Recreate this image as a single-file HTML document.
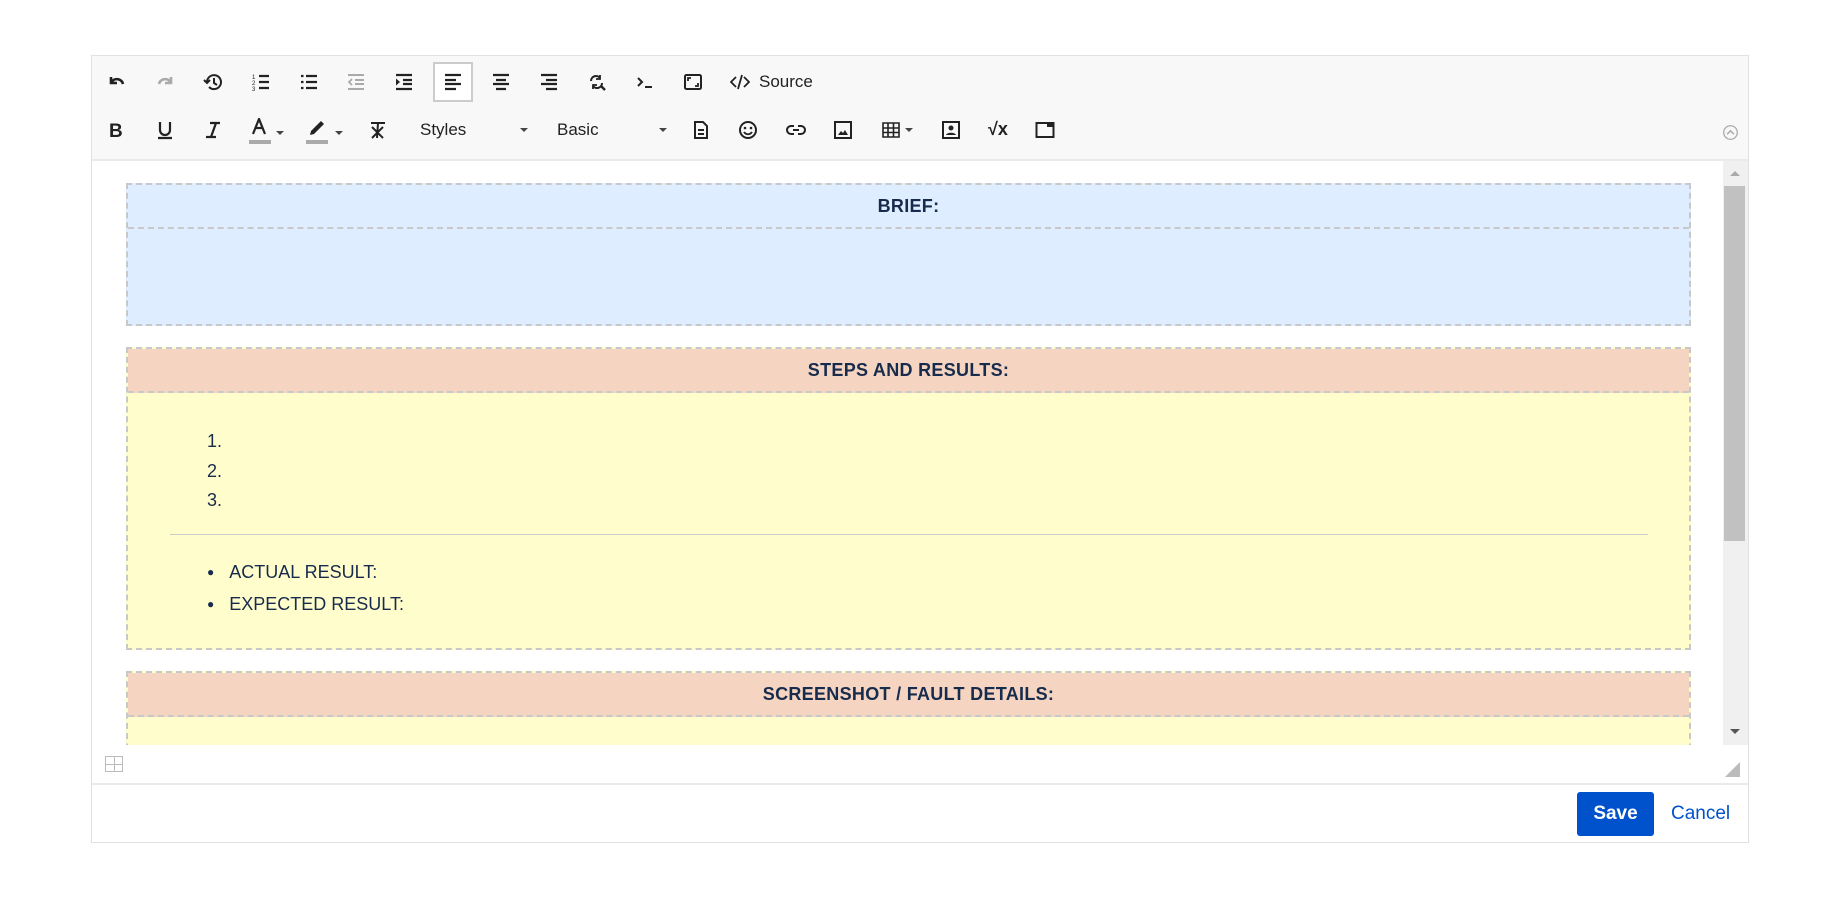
<!DOCTYPE html>
<html><head><meta charset="utf-8"><style>
*{box-sizing:border-box;margin:0;padding:0}
body{width:1840px;height:900px;background:#fff;font-family:"Liberation Sans",Arial,sans-serif;position:relative;overflow:hidden}
.ed{position:absolute;left:91px;top:55px;width:1658px;height:788px;border:1px solid #e1e1e1}
.tb{position:absolute;left:0;top:0;width:100%;height:105px;background:#f8f8f8;border-bottom:2px solid #ebebeb}
.i{position:absolute;width:20px;height:20px;color:#222}
.i svg{width:20px;height:20px;display:block}
.t{position:absolute;font-size:17px;color:#222}
.car{position:absolute;width:0;height:0;border-left:4px solid transparent;border-right:4px solid transparent;border-top:4px solid #444}
.ct{position:absolute;left:0;top:105px;width:1631px;height:584px;overflow:hidden;background:#fff}
.blk{position:absolute;left:34px;width:1565px;border:2px dashed #c8c8c8}
.hd{height:44px;border-bottom:2px dashed #c8c8c8;text-align:center;font-weight:bold;font-size:18px;color:#172b4d;line-height:42px;letter-spacing:.3px}
.sb{position:absolute;left:1631px;top:105px;width:25px;height:584px;background:#f0f0f0}
.c{font-size:18px;color:#172b4d;position:absolute}
</style></head><body>
<div class="ed">
<div class="tb">
<div class="i" style="left:15px;top:16px"><svg viewBox="0 0 20 20"><path d="M4 5v6h6M4.5 10.5C6 7.5 9 6.5 12 7.5c2 .7 3.5 2.5 4 4.5" fill="none" stroke="#222" stroke-width="2.6"/></svg></div>
<div class="i" style="left:63px;top:16px"><svg viewBox="0 0 20 20"><path d="M16 5v6h-6M15.5 10.5C14 7.5 11 6.5 8 7.5c-2 .7-3.5 2.5-4 4.5" fill="none" stroke="#aaa" stroke-width="2.6"/></svg></div>
<div class="i" style="left:111px;top:16px"><svg viewBox="0 0 20 20"><path d="M4 10a7 7 0 1 1 2 5" fill="none" stroke="#222" stroke-width="2"/><path d="M1 8l3 3 3-3" fill="none" stroke="#222" stroke-width="2"/><path d="M11 6v5l3 2" fill="none" stroke="#222" stroke-width="2"/></svg></div>
<div class="i" style="left:159px;top:16px"><svg viewBox="0 0 20 20"><path d="M8 4h10M8 10h10M8 16h10" stroke="#222" stroke-width="2.2"/><text x="1" y="7" font-size="6" fill="#222">1</text><text x="1" y="13" font-size="6" fill="#222">2</text><text x="1" y="19" font-size="6" fill="#222">3</text></svg></div>
<div class="i" style="left:207px;top:16px"><svg viewBox="0 0 20 20"><path d="M7 4h11M7 10h11M7 16h11M2 4h2.5M2 10h2.5M2 16h2.5" stroke="#222" stroke-width="2.2"/></svg></div>
<div class="i" style="left:254px;top:16px"><svg viewBox="0 0 20 20"><path d="M2 3h16M9 8h9M9 12h9M2 17h16" stroke="#aaa" stroke-width="2"/><path d="M6 7l-3 3 3 3" fill="none" stroke="#aaa" stroke-width="1.8"/></svg></div>
<div class="i" style="left:302px;top:16px"><svg viewBox="0 0 20 20"><path d="M2 3h16M9 8h9M9 12h9M2 17h16" stroke="#222" stroke-width="2.2"/><path d="M2 6.5l4 3.5-4 3.5z" fill="#222"/></svg></div>
<div style="position:absolute;left:341px;top:6px;width:40px;height:40px;border:2px solid #ccc;background:#fff"></div>
<div class="i" style="left:351px;top:16px"><svg viewBox="0 0 20 20"><path d="M2 3h16M2 8h11M2 12h16M2 17h11" stroke="#222" stroke-width="2.2"/></svg></div>
<div class="i" style="left:399px;top:16px"><svg viewBox="0 0 20 20"><path d="M2 3h16M5 8h10M2 12h16M5 17h10" stroke="#222" stroke-width="2.2"/></svg></div>
<div class="i" style="left:447px;top:16px"><svg viewBox="0 0 20 20"><path d="M2 3h16M7 8h11M2 12h16M7 17h11" stroke="#222" stroke-width="2.2"/></svg></div>
<div class="i" style="left:495px;top:16px"><svg viewBox="0 0 20 20"><path d="M4 9a5 5 0 0 1 9-3M15 11a5 5 0 0 1-9 3" fill="none" stroke="#222" stroke-width="2"/><path d="M13 3v4h-4M6 17v-4h4" fill="none" stroke="#222" stroke-width="1.8"/><path d="M14 14l4 4" stroke="#222" stroke-width="2.4"/></svg></div>
<div class="i" style="left:543px;top:16px"><svg viewBox="0 0 20 20"><path d="M3 6l4 4-4 4" fill="none" stroke="#222" stroke-width="2"/><path d="M10 15h7" stroke="#222" stroke-width="2"/></svg></div>
<div class="i" style="left:591px;top:16px"><svg viewBox="0 0 20 20"><rect x="2" y="3" width="16" height="14" rx="1.5" fill="none" stroke="#222" stroke-width="2"/><path d="M5 9V6h3M15 11v3h-3" fill="none" stroke="#222" stroke-width="1.8"/></svg></div>
<div class="i" style="left:638px;top:16px"><svg viewBox="0 0 20 20"><path d="M6 5l-5 5 5 5M14 5l5 5-5 5M12 3l-4 14" fill="none" stroke="#222" stroke-width="1.8"/></svg></div>
<div class="t" style="left:667px;top:16px">Source</div>
<div class="t" style="left:17px;top:65px;font-weight:bold;font-size:19px">B</div>
<div class="i" style="left:63px;top:64px"><svg viewBox="0 0 20 20"><path d="M5 2v8a5 5 0 0 0 10 0V2M3 18h14" fill="none" stroke="#222" stroke-width="2.2"/></svg></div>
<div class="i" style="left:111px;top:64px"><svg viewBox="0 0 20 20"><path d="M7 3h10M3 17h10M13 3L8 17" fill="none" stroke="#222" stroke-width="2.2"/></svg></div>
<div class="i" style="left:157px;top:62px"><svg viewBox="0 0 20 20"><path d="M4 16L10 1l6 15M6.5 10h7" fill="none" stroke="#222" stroke-width="2.2"/></svg></div>
<div style="position:absolute;left:157px;top:84px;width:22px;height:4px;background:#aaa"></div>
<div class="car" style="left:184px;top:75px"></div>
<div class="i" style="left:214px;top:62px"><svg viewBox="0 0 20 20"><path d="M4 17l1-4L15 3l3 3L8 16z" fill="#222"/></svg></div>
<div style="position:absolute;left:214px;top:84px;width:22px;height:4px;background:#aaa"></div>
<div class="car" style="left:243px;top:75px"></div>
<div class="i" style="left:276px;top:64px"><svg viewBox="0 0 20 20"><path d="M3 3h14M10 3l-1 15M4 7l11 11M15 7L4 18" fill="none" stroke="#222" stroke-width="2"/></svg></div>
<div class="t" style="left:328px;top:64px">Styles</div>
<div class="car" style="left:428px;top:72px"></div>
<div class="t" style="left:465px;top:64px">Basic</div>
<div class="car" style="left:567px;top:72px"></div>
<div class="i" style="left:599px;top:64px"><svg viewBox="0 0 20 20"><path d="M4 2h8l4 4v12H4z M7 10h6M7 14h6" fill="none" stroke="#222" stroke-width="2"/></svg></div>
<div class="i" style="left:646px;top:64px"><svg viewBox="0 0 20 20"><circle cx="10" cy="10" r="8" fill="none" stroke="#222" stroke-width="2"/><circle cx="7" cy="8" r="1.3" fill="#222"/><circle cx="13" cy="8" r="1.3" fill="#222"/><path d="M6 12c2 3 6 3 8 0" fill="none" stroke="#222" stroke-width="1.8"/></svg></div>
<div class="i" style="left:694px;top:64px"><svg viewBox="0 0 20 20"><path d="M8 6H5a4 4 0 0 0 0 8h3M12 6h3a4 4 0 0 1 0 8h-3M7 10h6" fill="none" stroke="#222" stroke-width="2"/></svg></div>
<div class="i" style="left:741px;top:64px"><svg viewBox="0 0 20 20"><rect x="2" y="2" width="16" height="16" fill="none" stroke="#222" stroke-width="2"/><path d="M5 15l3-4 2 2 2-3 3 5z" fill="#222"/></svg></div>
<div class="i" style="left:789px;top:64px"><svg viewBox="0 0 20 20"><path d="M2 3h16v14H2zM2 8h16M2 12.5h16M7 3v14M12.5 3v14" fill="none" stroke="#222" stroke-width="1.6"/></svg></div>
<div class="car" style="left:813px;top:72px"></div>
<div class="i" style="left:849px;top:64px"><svg viewBox="0 0 20 20"><rect x="2" y="2" width="16" height="16" fill="none" stroke="#222" stroke-width="2"/><circle cx="10" cy="8" r="2.5" fill="#222"/><path d="M5 15c1-3 9-3 10 0z" fill="#222"/></svg></div>
<div class="t" style="left:896px;top:63px;font-weight:bold;font-size:18px">√x</div>
<div class="i" style="left:943px;top:64px"><svg viewBox="0 0 20 20"><rect x="1.5" y="3" width="17" height="14" fill="none" stroke="#222" stroke-width="2"/><rect x="12" y="3" width="6.5" height="4" fill="#222"/></svg></div>
<div class="i" style="left:1630px;top:68px;width:17px;height:17px"><svg viewBox="0 0 20 20" style="width:17px;height:17px"><circle cx="10" cy="10" r="8" fill="none" stroke="#aaa" stroke-width="1.5"/><path d="M6 12l4-4 4 4" fill="none" stroke="#aaa" stroke-width="1.8"/></svg></div>
</div>
<div class="ct">
<div class="blk" style="top:22px;height:143px;background:#deedff"><div class="hd">BRIEF:</div></div>
<div class="blk" style="top:186px;height:303px;background:#fffdcb">
<div class="hd" style="background:#f5d5c2">STEPS AND RESULTS:</div>
<div class="c" style="left:79px;top:78px;line-height:29.5px">1.<br>2.<br>3.</div>
<div style="position:absolute;left:42px;top:185px;width:1478px;border-top:1px solid #ccc"></div>
<div class="c" style="left:79px;top:208px;line-height:30px"><span style="font-size:12px;position:relative;top:-2px">●</span>&nbsp;&nbsp;&nbsp;ACTUAL RESULT:<br><span style="font-size:12px;position:relative;top:-2px">●</span>&nbsp;&nbsp;&nbsp;EXPECTED RESULT:</div>
</div>
<div class="blk" style="top:510px;height:120px;background:#fffdcb"><div class="hd" style="background:#f5d5c2">SCREENSHOT / FAULT DETAILS:</div></div>
</div>
<div class="sb">
<div style="position:absolute;left:7px;top:10px;border-left:5px solid transparent;border-right:5px solid transparent;border-bottom:5px solid #aaa"></div>
<div style="position:absolute;left:1px;top:25px;width:21px;height:355px;background:#c1c1c1"></div>
<div style="position:absolute;left:7px;top:568px;border-left:5px solid transparent;border-right:5px solid transparent;border-top:5px solid #555"></div>
</div>
<div style="position:absolute;left:13px;top:700px;width:18px;height:16px;border:1px solid #bbb"><div style="position:absolute;left:8px;top:0;height:14px;border-left:1px solid #bbb"></div><div style="position:absolute;top:7px;left:0;width:16px;border-top:1px solid #bbb"></div></div>
<div style="position:absolute;left:1633px;top:706px;border-left:15px solid transparent;border-bottom:15px solid #bbb"></div>
<div style="position:absolute;left:0;top:727px;width:100%;border-top:2px solid #ebebeb"></div>
<div style="position:absolute;left:1485px;top:736px;width:77px;height:44px;background:#0052cc;border-radius:3px;color:#fff;font-weight:bold;font-size:19px;text-align:center;line-height:44px">Save</div>
<div style="position:absolute;left:1579px;top:747px;color:#0052cc;font-size:19px">Cancel</div>
</div>
</body></html>
